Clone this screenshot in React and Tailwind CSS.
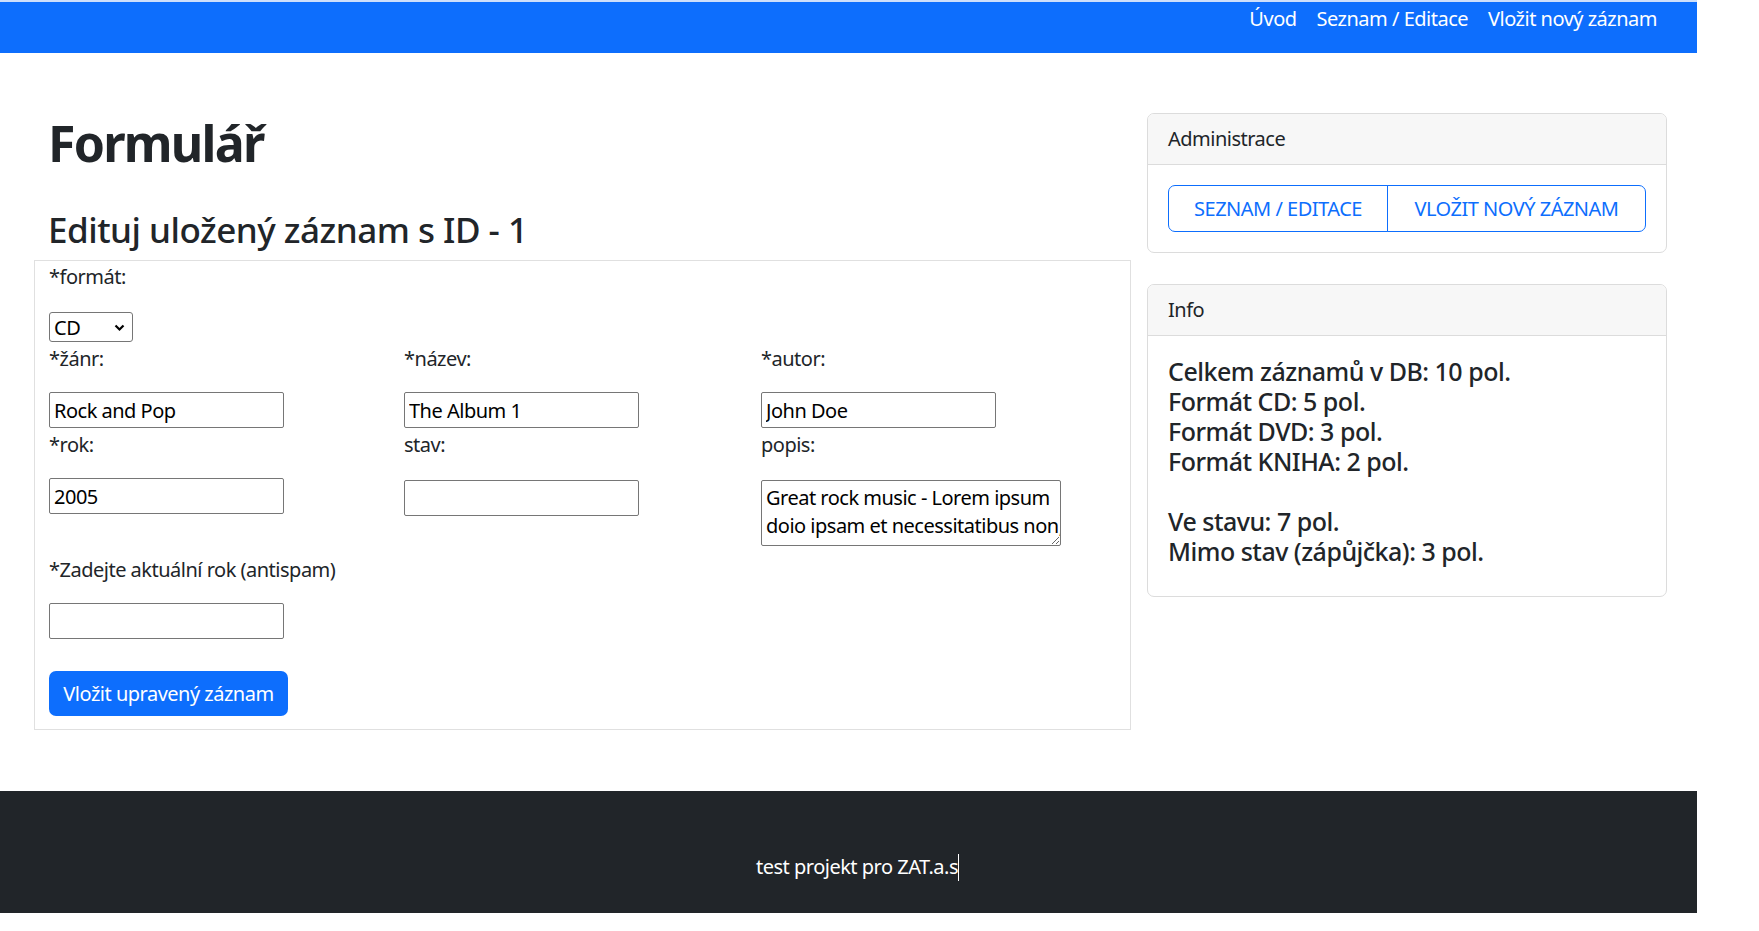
import React from "react"

const navLinks = ["Úvod", "Seznam / Editace", "Vložit nový záznam"]

const infoLines = [
  "Celkem záznamů v DB: 10 pol.",
  "Formát CD: 5 pol.",
  "Formát DVD: 3 pol.",
  "Formát KNIHA: 2 pol.",
  "",
  "Ve stavu: 7 pol.",
  "Mimo stav (zápůjčka): 3 pol.",
]

const inputCls =
  "w-[235px] h-[36px] border border-[#767676] rounded-[2px] px-[4px] text-[20px] tracking-[-0.025em] text-black outline-none bg-white font-['Noto_Sans','Open_Sans',sans-serif]"

const Field = ({ label, value, area }) => (
  <div className="flex flex-col items-start">
    <label className="leading-[30px] mt-[2px]">{label}</label>
    {area ? (
      <textarea
        defaultValue={value}
        wrap="off"
        className="mt-[20px] w-[300px] h-[66px] border border-[#767676] rounded-[2px] px-[4px] py-[3px] text-[20px] tracking-[-0.025em] leading-[28px] text-black outline-none overflow-hidden font-['Noto_Sans','Open_Sans',sans-serif]"
      />
    ) : (
      <input defaultValue={value} className={`${inputCls} ${label === "stav:" ? "mt-[20px]" : "mt-[18px]"}`} />
    )}
  </div>
)

export default function App() {
  return (
    <div className="w-[1759px] min-h-[931px] bg-white font-['Noto_Sans','Open_Sans',sans-serif] text-[20px] tracking-[-0.025em] text-[#212529]">
      <div className="w-[1697px]">
        <div className="h-[2px] bg-[#cddffb]" />
        <nav className="h-[51px] bg-[#0d6efd] flex justify-end items-start pt-[2px] pr-[30px]">
          {navLinks.map((l) => (
            <a key={l} className="px-[10px] leading-[30px] text-white">
              {l}
            </a>
          ))}
        </nav>

        <main className="flex gap-[16px] pl-[34px] pr-[30px] pt-[60px]">
          <section className="w-[1097px]">
            <h1 className="pl-[14px] text-[50px] leading-[60px] font-bold tracking-[-0.035em]">Formulář</h1>
            <h3 className="pl-[14px] mt-[36px] text-[35px] leading-[42px] font-medium">Edituj uložený záznam s ID - 1</h3>
            <form className="mt-[9px] border border-[#e0e0e0] px-[14px] pt-[1px] pb-[13px]">
              <label className="block leading-[30px]">*formát:</label>
              <div className="relative mt-[20px] w-[84px] h-[30px] border border-[#767676] rounded-[3px] bg-white flex items-center pl-[4px] text-black">
                <span className="leading-[28px] pt-[2px]">CD</span>
                <svg className="absolute right-[7px] top-[11px]" width="11" height="8" viewBox="0 0 11 8">
                  <path d="M1.5 1.5 L5.5 5.5 L9.5 1.5" fill="none" stroke="#000" strokeWidth="2.2" />
                </svg>
              </div>
              <div className="grid grid-cols-[355px_357px_355px]">
                <Field label="*žánr:" value="Rock and Pop" />
                <Field label="*název:" value="The Album 1" />
                <Field label="*autor:" value="John Doe" />
                <Field label="*rok:" value="2005" />
                <Field label="stav:" value="" />
                <Field
                  label="popis:"
                  area
                  value={"Great rock music - Lorem ipsum\ndoio ipsam et necessitatibus non, quidem voluptates sunt."}
                />
              </div>
              <label className="block mt-[9px] leading-[30px]">*Zadejte aktuální rok (antispam)</label>
              <input className={`${inputCls} mt-[18px] block`} />
              <button
                type="button"
                className="mt-[32px] h-[45px] w-[239px] rounded-[7px] bg-[#0d6efd] text-white leading-[30px]"
              >
                Vložit upravený záznam
              </button>
            </form>
          </section>

          <aside className="w-[520px]">
            <div className="border border-[#dcdcdc] rounded-[7px] overflow-hidden">
              <div className="bg-[#f7f7f7] border-b border-[#dcdcdc] px-[20px] py-[10px] leading-[30px]">Administrace</div>
              <div className="p-[20px]">
                <div className="flex">
                  <button className="w-[220px] h-[47px] border border-[#0d6efd] rounded-l-[7px] text-[#0d6efd] uppercase leading-[30px]">
                    Seznam / Editace
                  </button>
                  <button className="-ml-px w-[259px] h-[47px] border border-[#0d6efd] rounded-r-[7px] text-[#0d6efd] uppercase leading-[30px]">
                    Vložit nový záznam
                  </button>
                </div>
              </div>
            </div>

            <div className="mt-[31px] border border-[#dcdcdc] rounded-[7px] overflow-hidden">
              <div className="bg-[#f7f7f7] border-b border-[#dcdcdc] px-[20px] py-[10px] leading-[30px]">Info</div>
              <div className="p-[20px]">
                <h5 className="mb-[10px] text-[25px] leading-[30px] font-medium">
                  {infoLines.map((l, i) => (
                    <div key={i} className="h-[30px]">
                      {l}
                    </div>
                  ))}
                </h5>
              </div>
            </div>
          </aside>
        </main>

        <footer className="mt-[61px] h-[122px] bg-[#212529] flex justify-center pl-[18px] pt-[61px]">
          <div className="flex items-start text-white leading-[30px]">
            <span>test projekt pro ZAT.a.s</span>
            <span className="mt-[2px] w-px h-[27px] bg-white" />
          </div>
        </footer>
      </div>
    </div>
  )
}
